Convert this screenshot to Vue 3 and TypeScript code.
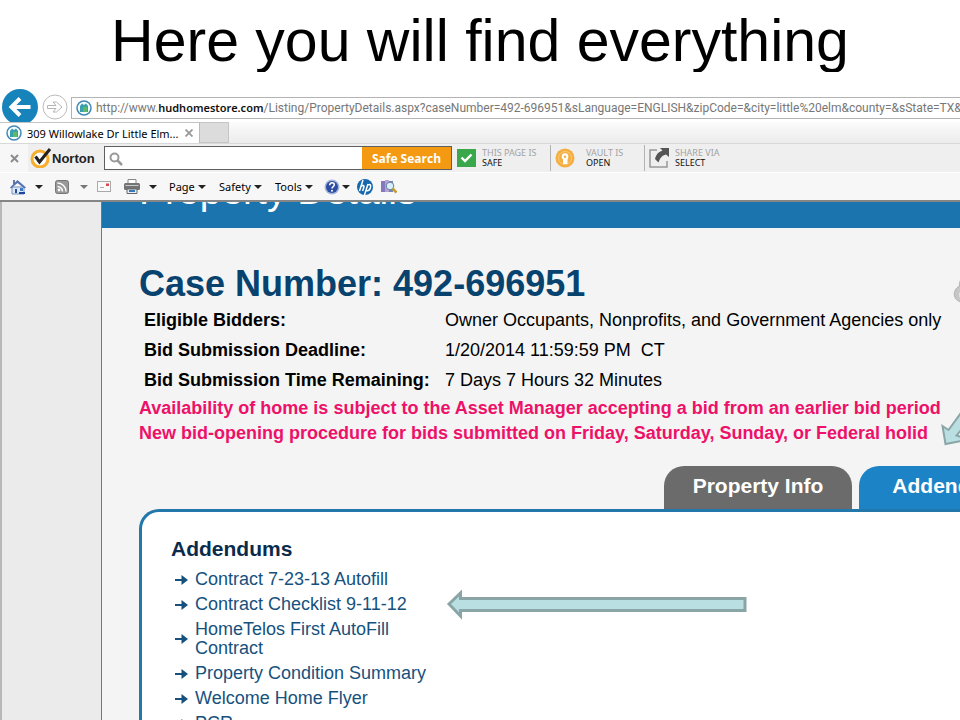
<script setup lang="ts">
import { ref } from 'vue'

interface Detail {
  label: string
  value: string
}

const details: Detail[] = [
  { label: 'Eligible Bidders:', value: 'Owner Occupants, Nonprofits, and Government Agencies only' },
  { label: 'Bid Submission Deadline:', value: '1/20/2014 11:59:59 PM \u00a0CT' },
  { label: 'Bid Submission Time Remaining:', value: '7 Days 7 Hours 32 Minutes' },
]

const addendums: string[] = [
  'Contract 7-23-13 Autofill',
  'Contract Checklist 9-11-12',
  'HomeTelos First AutoFill Contract',
  'Property Condition Summary',
  'Welcome Home Flyer',
  'PCR',
]

const query = ref('')
</script>

<template>
  <main class="slide">
    <h1 class="title">Here you will find everything</h1>

    <section class="browser">
      <header class="chrome">
        <div class="address-row">
          <button class="back" aria-label="Back">
            <svg width="38" height="38" viewBox="0 0 38 38">
              <circle cx="19" cy="19" r="18" fill="#1683bb" />
              <path d="M29.500 19H11M19 10.500L10.500 19l8.500 8.500" fill="none" stroke="#fff" stroke-width="4" />
            </svg>
          </button>
          <button class="forward" aria-label="Forward">
            <svg width="26" height="26" viewBox="0 0 26 26">
              <circle cx="13" cy="13" r="12" fill="#fff" stroke="#bbb" />
              <path d="M5.500 11.500h8.500L11 8h3.500l5.500 5-5.500 5H11l3-3.500H5.500z" fill="#fff" stroke="#b5b5b5" />
            </svg>
          </button>
          <div class="address">
            <svg width="16" height="16" viewBox="0 0 16 16">
              <circle cx="8" cy="8" r="7" fill="#f4fbfd" stroke="#4388b8" stroke-width="1.500" />
              <path d="M4 6l2-2.500 2 1.500 2-1.500L12 6v6H4z" fill="#3ba0ae" />
              <path d="M7 7h4v5H7z" fill="#5dba68" />
            </svg>
            <div class="url" role="textbox" aria-label="Address" contenteditable="true" spellcheck="false">http://www.<b>hudhomestore.com</b>/Listing/PropertyDetails.aspx?caseNumber=492-696951&amp;sLanguage=ENGLISH&amp;zipCode=&amp;city=little%20elm&amp;county=&amp;sState=TX&amp;</div>
          </div>
        </div>

        <div class="tab-row">
          <div class="page-tab">
            <svg width="16" height="16" viewBox="0 0 16 16">
              <circle cx="8" cy="8" r="7" fill="#f4fbfd" stroke="#4388b8" stroke-width="1.500" />
              <path d="M4 6l2-2.500 2 1.500 2-1.500L12 6v6H4z" fill="#3ba0ae" />
              <path d="M7 7h4v5H7z" fill="#5dba68" />
            </svg>
            <span class="page-tab-title">309 Willowlake Dr Little Elm...</span>
            <button aria-label="Close tab">
              <svg width="8" height="8" viewBox="0 0 8 8"><path d="M0.500 0.500l7 7M7.500 0.500l-7 7" stroke="#999" stroke-width="1.800" /></svg>
            </button>
          </div>
          <button class="new-tab" aria-label="New tab"></button>
        </div>

        <div class="norton-row">
          <button class="dismiss" aria-label="Close toolbar">
            <svg width="9" height="9" viewBox="0 0 9 9"><path d="M1 1l7 7M8 1L1 8" stroke="#8c8c8c" stroke-width="2" /></svg>
          </button>
          <div class="norton">
            <svg width="22" height="20" viewBox="0 0 22 20">
              <circle cx="10" cy="11" r="8" fill="#fff" stroke="#f6ae2d" stroke-width="3" />
              <path d="M5.500 8.500l4 5.500L20 1" fill="none" stroke="#222" stroke-width="3" />
            </svg>
            <span>Norton</span>
          </div>
          <form class="search" @submit.prevent>
            <label class="glass" for="safe-search" aria-label="Search">
              <svg width="14" height="14" viewBox="0 0 14 14">
                <circle cx="5.500" cy="5.500" r="4" fill="none" stroke="#999" stroke-width="2" />
                <path d="M8.500 8.500l4.500 4.500" stroke="#999" stroke-width="2.500" />
              </svg>
            </label>
            <input id="safe-search" v-model="query" type="text" />
            <button type="submit">Safe Search</button>
          </form>
          <button class="status safe">
            <svg width="19" height="18" viewBox="0 0 19 18">
              <rect width="19" height="18" fill="#3aa84a" />
              <path d="M4.500 8.500l3.500 3.500 6.500-6.500" fill="none" stroke="#fff" stroke-width="2.400" />
            </svg>
            <span class="status-text"><span>THIS PAGE IS</span><strong>SAFE</strong></span>
          </button>
          <button class="status vault">
            <svg width="20" height="20" viewBox="0 0 20 20">
              <circle cx="10" cy="10" r="9.500" fill="#f5ae42" />
              <circle cx="10" cy="10" r="6.500" fill="none" stroke="#fbc878" />
              <circle cx="10" cy="8.500" r="3.300" fill="#fff" />
              <path d="M8 10h4.500v6H8z" fill="#fff" />
              <circle cx="10" cy="8.800" r="1.200" fill="#f5ae42" />
            </svg>
            <span class="status-text"><span>VAULT IS</span><strong>OPEN</strong></span>
          </button>
          <button class="status share">
            <svg width="20" height="20" viewBox="0 0 20 20">
              <path d="M8 2H1v17h17v-6" fill="none" stroke="#999" stroke-width="1.500" />
              <path d="M11 0h9v9l-3-2.500c-4 1-6 3.500-7.500 8L6 11c1-4 3-7 7.500-8.500z" fill="#555" />
            </svg>
            <span class="status-text"><span>SHARE VIA</span><strong>SELECT</strong></span>
          </button>
        </div>

        <nav class="command-row">
          <button class="tool home" aria-label="Home">
            <svg width="16" height="16" viewBox="0 0 16 16">
              <path d="M3 1h2v4H3z" fill="#68799d" />
              <path d="M2 8h12v7H2z" fill="#dce7f8" stroke="#7a91bb" />
              <path d="M0 8.500L7.500 1 16 8.500l-1.500 1L7.500 4 1 9.500z" fill="#5370b4" />
              <path d="M5 10h2v4H5z" fill="#294b9e" /><path d="M10 9h3v3h-3z" fill="#3d7acd" />
              <path d="M9 13h6v2H9z" fill="#1d46a0" />
            </svg>
            <i class="caret"></i>
          </button>
          <button class="tool feed" aria-label="Feeds">
            <svg width="14" height="14" viewBox="0 0 14 14">
              <rect x="0.500" y="0.500" width="13" height="13" rx="2" fill="#999" stroke="#777" />
              <circle cx="4" cy="10" r="1.400" fill="#fff" />
              <path d="M2.500 6.500a5 5 0 0 1 5 5M2.500 3a8.500 8.500 0 0 1 8.500 8.500" fill="none" stroke="#fff" stroke-width="1.500" />
            </svg>
            <i class="caret dim"></i>
          </button>
          <button class="tool mail" aria-label="Read mail">
            <svg width="14" height="11" viewBox="0 0 14 11">
              <rect x="0.500" y="0.500" width="13" height="10" fill="#fafafa" stroke="#aaa" />
              <path d="M9 2.500h3v2.500H9z" fill="#d9484c" /><path d="M3 6.500h4" stroke="#aaa" />
            </svg>
          </button>
          <button class="tool print" aria-label="Print">
            <svg width="16" height="15" viewBox="0 0 16 15">
              <path d="M4 0.500h8v6H4z" fill="#fff" stroke="#888" />
              <rect y="4" width="16" height="7" rx="1.500" fill="#747474" />
              <path d="M1.500 6.500h13" stroke="#c8c8c8" />
              <path d="M3 10h10v4.500H3z" fill="#e6edf4" stroke="#666" /><path d="M5 12h6" stroke="#347abb" stroke-width="2" />
            </svg>
            <i class="caret"></i>
          </button>
          <button class="tool page">Page</button>
          <button class="tool safety">Safety</button>
          <button class="tool tools">Tools</button>
          <button class="tool help" aria-label="Help">
            <svg width="16" height="16" viewBox="0 0 16 16">
              <circle cx="8" cy="8" r="7.500" fill="#a8b5da" />
              <circle cx="8" cy="8" r="6" fill="#2d4da3" />
              <path d="M5.700 6.200c0-3.300 5-3 4.600-.2C10.100 7.700 8 7.500 8 9.600" fill="none" stroke="#fff" stroke-width="1.600" />
              <circle cx="8" cy="11.800" r="1" fill="#fff" />
            </svg>
            <i class="caret"></i>
          </button>
          <button class="tool hp" aria-label="HP">
            <svg width="16" height="16" viewBox="0 0 16 16">
              <circle cx="8" cy="8" r="8" fill="#1567ae" />
              <path d="M6 1L2.500 12M4 7.500c2-2 3.500-1 2.800 1L5.600 12M11 5L7.500 16M10.600 6c3-1.500 3.500.5 2.700 3-.8 2.500-2 3-4 2.500" fill="none" stroke="#fff" stroke-width="1.500" />
            </svg>
          </button>
          <button class="tool research" aria-label="Research">
            <svg width="16" height="15" viewBox="0 0 16 15">
              <path d="M0 2h4v11H0z" fill="#8578bd" /><path d="M4 1h4v12H4z" fill="#b5a4d6" />
              <path d="M8 2h4v11H8z" fill="#7086bd" />
              <circle cx="9" cy="7" r="3.800" fill="#d9effa" stroke="#66839d" />
              <path d="M11.500 9.500l4 4" stroke="#c79a2c" stroke-width="2.500" />
            </svg>
          </button>
        </nav>
      </header>

      <div class="viewport">
        <article class="sheet">
          <div class="banner"><h2>Property Details</h2></div>
          <div class="body">
            <h3 class="case">Case Number: 492-696951</h3>
            <table class="details">
              <tbody>
                <tr v-for="d in details" :key="d.label">
                  <th scope="row">{{ d.label }}</th>
                  <td>{{ d.value }}</td>
                </tr>
              </tbody>
            </table>
            <p class="notice">Availability of home is subject to the Asset Manager accepting a bid from an earlier bid period</p>
            <p class="notice">New bid-opening procedure for bids submitted on Friday, Saturday, Sunday, or Federal holid</p>

            <div class="tabs">
              <button class="tab">Property Info</button>
              <button class="tab active">Addendums</button>
            </div>
            <section class="panel">
              <h4>Addendums</h4>
              <ul>
                <li v-for="name in addendums" :key="name">
                  <svg width="13" height="12" viewBox="0 0 13 12">
                    <path d="M0 6h9" stroke="#16517e" stroke-width="2" />
                    <path d="M6.500 1L13 6l-6.500 5z" fill="#16517e" />
                  </svg>
                  <a href="#">{{ name }}</a>
                </li>
              </ul>
            </section>
          </div>
        </article>
      </div>
    </section>

    <svg class="pointer" width="300" height="30" viewBox="0 0 300 30" aria-hidden="true">
      <path d="M2 14L13.500 3v5.500H298v12H13.500V26z" fill="#b9dfe3" stroke="#8aa5a5" stroke-width="3" />
    </svg>
    <svg class="corner-pointer" width="20" height="40" viewBox="0 0 20 40" aria-hidden="true">
      <path d="M2.500 18l6 4L26-2v18l-9.500 11.500L27 31v1L5.500 36z" fill="#b9dfe3" stroke="#8aa5a5" stroke-width="2" />
    </svg>
    <svg class="ornament" width="8" height="28" viewBox="0 0 8 28" aria-hidden="true">
      <path d="M12 1C8 3 7 7 7.500 10c-4 2-6 6-5 10 1 4 4 6 9 6z" fill="#c6c6c6" stroke="#b3b3b3" />
      <path d="M12 13c-5 1-6 6-4 9l4 1z" fill="#e6e6e6" />
    </svg>
  </main>
</template>

<style>
body {
  background: #fff;
}
</style>

<style scoped>
.slide,
.slide * {
  box-sizing: border-box;
}
.slide {
  position: relative;
  height: 100vh;
  display: flex;
  flex-direction: column;
  overflow: hidden;
  font-family: 'Liberation Sans', Arial, sans-serif;
  color: #000;
}
button {
  border: 0;
  padding: 0;
  margin: 0;
  background: none;
  font: inherit;
  color: inherit;
}
svg {
  display: block;
  flex: none;
}
.title {
  flex: none;
  margin: 0 0 16px;
  height: 72px;
  overflow: hidden;
  text-align: center;
  white-space: nowrap;
  font-size: 59px;
  font-weight: 400;
  line-height: 82px;
}
.browser {
  flex: 1;
  min-height: 0;
  display: flex;
  flex-direction: column;
}
.chrome {
  flex: none;
  font-family: 'Noto Sans', 'Open Sans', sans-serif;
  font-size: 11px;
  border-bottom: 2px solid #858585;
  background: #f7f7f7;
}
.address-row {
  display: flex;
  align-items: flex-start;
  height: 34px;
  overflow: hidden;
  background: #fff;
  padding-left: 1px;
}
.forward {
  margin: 6px 3px 0;
}
.address {
  flex: 1;
  min-width: 0;
  display: flex;
  align-items: center;
  gap: 4px;
  height: 22px;
  margin-top: 9px;
  padding-left: 4px;
  border: 1px solid #b3b3b3;
  border-right: 0;
}
.url {
  flex: 1;
  min-width: 0;
  overflow: hidden;
  white-space: nowrap;
  font-family: Roboto, 'Noto Sans', sans-serif;
  font-size: 12px;
  line-height: 20px;
  color: #777;
  outline: none;
}
.url b {
  font-family: 'Noto Sans', 'Open Sans', sans-serif;
  font-size: 11px;
  font-weight: 600;
  color: #111;
}
.tab-row {
  display: flex;
  height: 22px;
  border-bottom: 1px solid #d8d8d8;
  background: linear-gradient(#fbfbfb, #ececec);
}
.page-tab {
  display: flex;
  align-items: center;
  width: 200px;
  padding-left: 6px;
  border-top: 1px solid #c4c4c4;
  border-right: 1px solid #bbb;
  background: #fff;
}
.page-tab-title {
  flex: 1;
  padding-left: 5px;
  white-space: nowrap;
}
.page-tab button {
  padding-right: 6px;
}
.new-tab {
  width: 29px;
  border: 1px solid #c6c6c6;
  border-left: 0;
  background: #dcdcdc;
}
.norton-row {
  display: flex;
  align-items: center;
  height: 28px;
  background: #efefef;
  white-space: nowrap;
}
.dismiss {
  align-self: stretch;
  width: 28px;
  padding-left: 10px;
  background: #f7f7f7;
}
.norton {
  display: flex;
  align-items: center;
  width: 76px;
  padding-left: 2px;
  font-family: 'Liberation Sans', Arial, sans-serif;
  font-size: 13px;
  font-weight: 700;
  color: #222;
}
.search {
  display: flex;
  width: 348px;
  height: 24px;
  border: 1px solid #5f5f5f;
  background: #fff;
}
.glass {
  padding: 5px 0 0 4px;
}
.search input {
  flex: 1;
  min-width: 0;
  border: 0;
  outline: none;
  background: none;
}
.search button {
  width: 89px;
  background: #f39a12;
  color: #fff;
  font-family: 'Open Sans', sans-serif;
  font-size: 12px;
  font-weight: 700;
}
.status {
  display: flex;
  align-items: center;
  height: 26px;
  text-align: left;
}
.status + .status {
  border-left: 1px solid #b3b3b3;
}
.status-text {
  display: flex;
  flex-direction: column;
  font-size: 9px;
  line-height: 10px;
  color: #a3a3a3;
}
.status-text strong {
  font-weight: 400;
  color: #111;
}
.safe {
  width: 98px;
  padding-left: 5px;
  gap: 6px;
}
.vault {
  width: 94px;
  padding-left: 4px;
  gap: 11px;
}
.share {
  padding-left: 4px;
  gap: 6px;
}
.command-row {
  display: flex;
  align-items: center;
  height: 28px;
  padding-left: 10px;
  border-top: 1px solid #fff;
}
.tool {
  display: flex;
  align-items: center;
  height: 20px;
  white-space: nowrap;
}
.caret,
.page::after,
.safety::after,
.tools::after {
  content: '';
  border: 4px solid transparent;
  border-top-color: #222;
  border-bottom: 0;
}
.caret.dim {
  border-top-color: #777;
}
.home {
  gap: 9px;
  width: 45px;
}
.feed {
  gap: 11px;
  width: 42px;
}
.mail {
  width: 27px;
}
.print {
  gap: 9px;
  width: 45px;
}
.page,
.safety,
.tools {
  gap: 3px;
}
.page {
  width: 50px;
}
.safety {
  width: 56px;
}
.tools {
  width: 49px;
}
.help {
  gap: 2px;
  width: 33px;
}
.hp {
  width: 24px;
}
.viewport {
  flex: 1;
  min-height: 0;
  overflow: hidden;
  padding-left: 99px;
  border-left: 2px solid #b8b8b8;
  background: #ebebeb;
}
.sheet {
  min-height: 100%;
  border-left: 1px solid #777;
  background: #f4f4f4;
}
.banner {
  display: flex;
  align-items: flex-end;
  height: 26px;
  padding-left: 37px;
  overflow: hidden;
  background: #1c74ae;
}
.banner h2 {
  margin: 0 0 15px;
  color: #fff;
  font-size: 39px;
  font-weight: 400;
  line-height: 44px;
}
.body {
  padding: 35px 0 0 37px;
}
.case {
  margin: 0;
  color: #07436e;
  font-size: 36px;
  line-height: 42px;
}
.details {
  margin: 0 0 1px 5px;
  border-collapse: collapse;
  font-size: 18px;
  line-height: 30px;
  white-space: nowrap;
}
.details th {
  width: 301px;
  padding: 0;
  text-align: left;
}
.details td {
  padding: 0;
}
.notice {
  margin: 0;
  overflow: hidden;
  white-space: nowrap;
  color: #ed1169;
  font-size: 18px;
  font-weight: 700;
  line-height: 25px;
}
.tabs {
  display: flex;
  gap: 7px;
  justify-content: flex-end;
  margin: 20px -87px 0 0;
}
.tab {
  flex: none;
  width: 188px;
  height: 43px;
  padding-bottom: 4px;
  border-radius: 20px 20px 0 0;
  background: #6b6b6b;
  color: #fff;
  font-size: 21px;
  font-weight: 700;
}
.tab.active {
  background: #1c84c6;
}
.panel {
  padding: 25px 0 20px 29px;
  border: solid #2277ab;
  border-width: 3px 0 0 3px;
  border-radius: 20px 0 0 0;
  background: #fff;
}
.panel h4 {
  margin: 0 0 6px;
  color: #0b2b4c;
  font-size: 21px;
  line-height: 24px;
}
.panel ul {
  margin: 0;
  padding: 0 0 0 4px;
  list-style: none;
}
.panel li {
  display: flex;
  align-items: center;
  gap: 7px;
  width: 260px;
  padding: 3px 0;
  font-size: 18px;
  line-height: 19px;
}
.panel a {
  color: #16517e;
  text-decoration: none;
}
.pointer {
  position: absolute;
  left: 447px;
  top: 590px;
}
.corner-pointer {
  position: absolute;
  right: 0;
  top: 408px;
}
.ornament {
  position: absolute;
  right: 0;
  top: 276px;
}
</style>
